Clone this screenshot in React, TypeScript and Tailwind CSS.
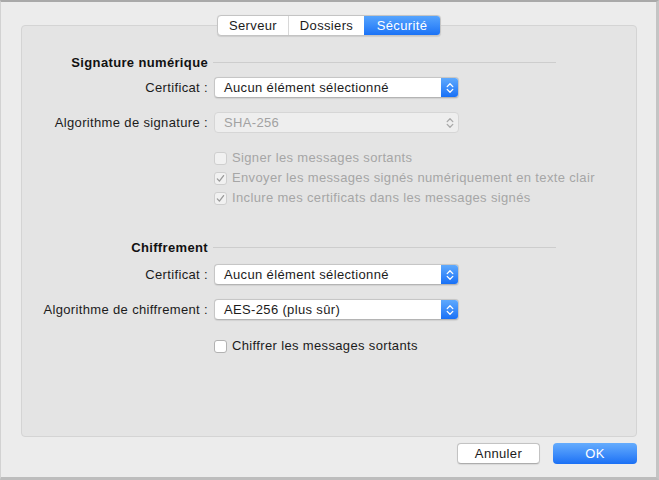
import type { ReactNode } from 'react';

const font = { fontFamily: '"Liberation Sans", Arial, sans-serif' };

function Chevrons({ color }: { color: string }) {
  return (
    <svg width="8" height="12" viewBox="0 0 8 12" fill="none">
      <path d="M1.2 4.6 L4 1.8 L6.8 4.6" stroke={color} strokeWidth="1.3" strokeLinecap="round" strokeLinejoin="round" />
      <path d="M1.2 7.4 L4 10.2 L6.8 7.4" stroke={color} strokeWidth="1.3" strokeLinecap="round" strokeLinejoin="round" />
    </svg>
  );
}

function Popup({ value, disabled = false }: { value: string; disabled?: boolean }) {
  if (disabled) {
    return (
      <div className="flex h-[21px] w-[245px] items-center justify-between rounded-[4px] border border-[#d6d6d6] bg-[#eeeeee] pl-[9px] pr-[4px] text-[13px] text-[#a2a2a2]">
        <span>{value}</span>
        <Chevrons color="#a8a8a8" />
      </div>
    );
  }
  return (
    <div className="flex h-[21px] w-[245px] items-stretch overflow-hidden rounded-[4px] border border-[#c6c6c6] border-b-[#b4b4b4] bg-white text-[13px] text-[#1b1b1b] shadow-[0_0.5px_1px_rgba(0,0,0,0.08)]">
      <span className="flex flex-1 items-center pl-[9px]">{value}</span>
      <span className="flex w-[17px] items-center justify-center bg-gradient-to-b from-[#5ea9fd] to-[#1770f6]">
        <Chevrons color="#ffffff" />
      </span>
    </div>
  );
}

function Check({ label, checked = false, disabled = false }: { label: string; checked?: boolean; disabled?: boolean }) {
  return (
    <div className={`flex h-[20px] items-center gap-[5px] text-[13px] ${disabled ? 'text-[#a6a6a6]' : 'text-[#1b1b1b]'}`}>
      <span
        className={`flex h-[13px] w-[13px] items-center justify-center rounded-[3px] border ${
          disabled ? 'border-[#cfcfcf] bg-[#f1f1f1]' : 'border-[#b2b2b2] bg-white'
        }`}
      >
        {checked && (
          <svg width="9" height="9" viewBox="0 0 9 9" fill="none">
            <path d="M1.3 4.9 L3.4 7.1 L7.6 1.6" stroke="#9a9a9a" strokeWidth="1.3" strokeLinecap="round" strokeLinejoin="round" />
          </svg>
        )}
      </span>
      <span>{label}</span>
    </div>
  );
}

function Row({ label, children, className = '' }: { label: ReactNode; children: ReactNode; className?: string }) {
  return (
    <div className={`grid grid-cols-[186px_1fr] items-center gap-x-[6px] ${className}`}>
      <div className="text-right text-[13px] text-[#1b1b1b]">{label}</div>
      <div>{children}</div>
    </div>
  );
}

function Header({ title, className = '' }: { title: string; className?: string }) {
  return (
    <div className={`grid h-[16px] grid-cols-[186px_343px] items-center gap-x-[5px] ${className}`}>
      <div className="text-right text-[13px] font-bold leading-[16px] text-[#111]">{title}</div>
      <div className="-mt-[2px] h-px bg-[#cdcdcd]" />
    </div>
  );
}

export default function App() {
  const tabs = ['Serveur', 'Dossiers', 'Sécurité'];
  return (
    <div
      style={font}
      className="flex h-[480px] w-[659px] flex-col border-t-2 border-r-[3px] border-b-[3px] border-l border-t-[#a9a9a9] border-r-[#c4c4c4] border-b-[#bdbdbd] border-l-[#d2d2d2] bg-[#ececec] pt-[13px] pl-[20px] pr-[19px] leading-[16px] tracking-[0.35px]"
    >
      <div className="relative z-10 -mb-[11px] flex justify-center">
        <div className="flex h-[21px] overflow-hidden rounded-[4px] border border-[#c4c4c4] bg-white text-[13px] shadow-[0_0.5px_1px_rgba(0,0,0,0.1)]">
          {tabs.map((tab, i) => (
            <div
              key={tab}
              className={`flex items-center justify-center ${i === 0 ? 'w-[70px]' : 'w-[76px]'} ${
                i === 1 ? 'border-l border-[#d8d8d8]' : ''
              } ${i === 2 ? 'bg-gradient-to-b from-[#56a4fd] to-[#1a72f6] text-white' : 'text-[#1b1b1b]'}`}
            >
              {tab}
            </div>
          ))}
        </div>
      </div>

      <div className="h-[412px] w-[616px] rounded-[4px] border border-[#d4d4d4] bg-[#e4e4e4] pt-[29px]">
        <Header title="Signature numérique" />
        <Row label="Certificat :" className="mt-[6px]">
          <Popup value="Aucun élément sélectionné" />
        </Row>
        <Row label="Algorithme de signature :" className="mt-[14px]">
          <Popup value="SHA-256" disabled />
        </Row>
        <div className="mt-[15px] pl-[192px]">
          <Check label="Signer les messages sortants" disabled />
          <Check label="Envoyer les messages signés numériquement en texte clair" checked disabled />
          <Check label="Inclure mes certificats dans les messages signés" checked disabled />
        </div>

        <Header title="Chiffrement" className="mt-[32px]" />
        <Row label="Certificat :" className="mt-[8px]">
          <Popup value="Aucun élément sélectionné" />
        </Row>
        <Row label="Algorithme de chiffrement :" className="mt-[14px]">
          <Popup value="AES-256 (plus sûr)" />
        </Row>
        <div className="mt-[16px] pl-[192px]">
          <Check label="Chiffrer les messages sortants" />
        </div>
      </div>

      <div className="mt-[6px] flex justify-end gap-[13px]">
        <button className="flex h-[21px] w-[83px] items-center justify-center rounded-[4px] border border-[#c3c3c3] border-b-[#adadad] bg-white text-[13px] text-[#1b1b1b] shadow-[0_0.5px_1px_rgba(0,0,0,0.08)]">
          Annuler
        </button>
        <button className="flex h-[21px] w-[84px] items-center justify-center rounded-[4px] bg-gradient-to-b from-[#65acfd] to-[#1a70f5] text-[13px] text-white">
          OK
        </button>
      </div>
    </div>
  );
}
